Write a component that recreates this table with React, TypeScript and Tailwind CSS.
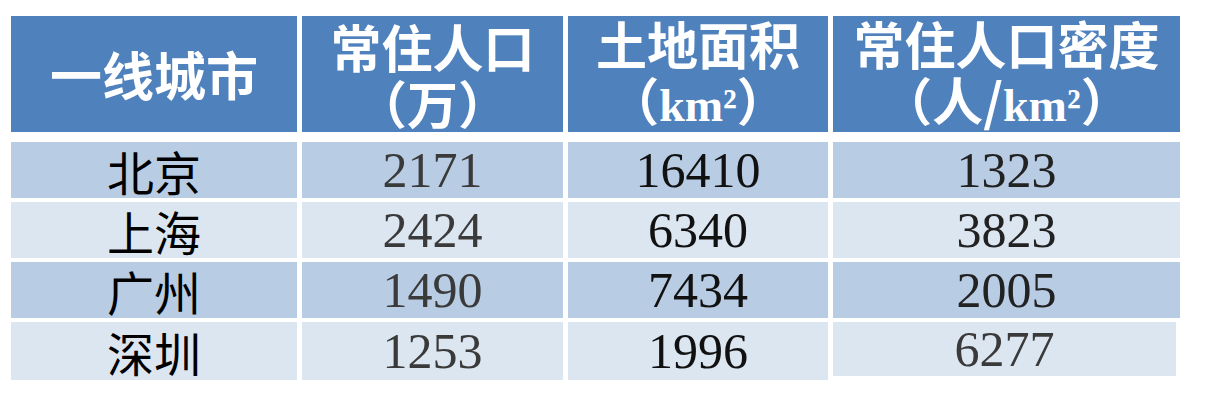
const rows = [
  { city: "北京", pop: "2171", area: "16410", density: "1323" },
  { city: "上海", pop: "2424", area: "6340", density: "3823" },
  { city: "广州", pop: "1490", area: "7434", density: "2005" },
  { city: "深圳", pop: "1253", area: "1996", density: "6277" },
];

const cjk = "font-['Noto_Sans_CJK_SC',sans-serif]";
const num = "font-['Liberation_Serif','Noto_Sans_CJK_SC',serif]";

export default function App() {
  return (
    <div className="h-[402px] w-[1218px] bg-white pl-[11px] pt-[16px]">
      <div className="grid w-[1169px] grid-cols-[286px_261px_260px_347px] gap-x-[5px]">
        {/* Header */}
        <div className={`flex h-[116px] items-center justify-center bg-[#4f81bd] text-[52px] font-bold leading-none text-white ${cjk}`}>
          一线城市
        </div>
        <div className={`flex h-[116px] flex-col items-center justify-center bg-[#4f81bd] text-[51px] font-bold leading-[56px] text-white ${cjk}`}>
          <span>常住人口</span>
          <span>（万）</span>
        </div>
        <div className={`flex h-[116px] flex-col items-center justify-center bg-[#4f81bd] text-[51px] font-bold leading-[56px] text-white ${cjk}`}>
          <span>土地面积</span>
          <span>
            （<span className={`${num} text-[46px]`}>km²</span>）
          </span>
        </div>
        <div className={`flex h-[116px] flex-col items-center justify-center bg-[#4f81bd] text-[51px] font-bold leading-[56px] text-white ${cjk}`}>
          <span>常住人口密度</span>
          <span>
            （人/<span className={`${num} text-[46px]`}>km²</span>）
          </span>
        </div>

        <div className="col-span-4 h-[10px]" />

        {rows.map((r, i) => {
          const bg = i % 2 === 0 ? "bg-[#b8cce4]" : "bg-[#dce6f1]";
          const last = i === rows.length - 1;
          const h = last ? "h-[58px]" : "h-[56px]";
          return (
            <div key={r.city} className={`col-span-4 grid grid-cols-subgrid ${last ? "" : "mb-[4px]"}`}>
              <div className={`flex ${h} items-center justify-center ${bg} text-[47px] leading-none text-black ${cjk}`}>
                {r.city}
              </div>
              <div className={`flex ${h} items-center justify-center ${bg} text-[50px] leading-none text-[#3a3a3a] ${num}`}>
                {r.pop}
              </div>
              <div className={`flex ${h} items-center justify-center ${bg} text-[50px] leading-none text-[#111] ${num}`}>
                {r.area}
              </div>
              <div
                className={`flex items-center justify-center ${bg} text-[50px] leading-none ${num} ${
                  last ? "mr-[4px] h-[54px] text-[#3a3a3a]" : "h-[56px] text-[#222]"
                }`}
              >
                {r.density}
              </div>
            </div>
          );
        })}
      </div>
    </div>
  );
}
